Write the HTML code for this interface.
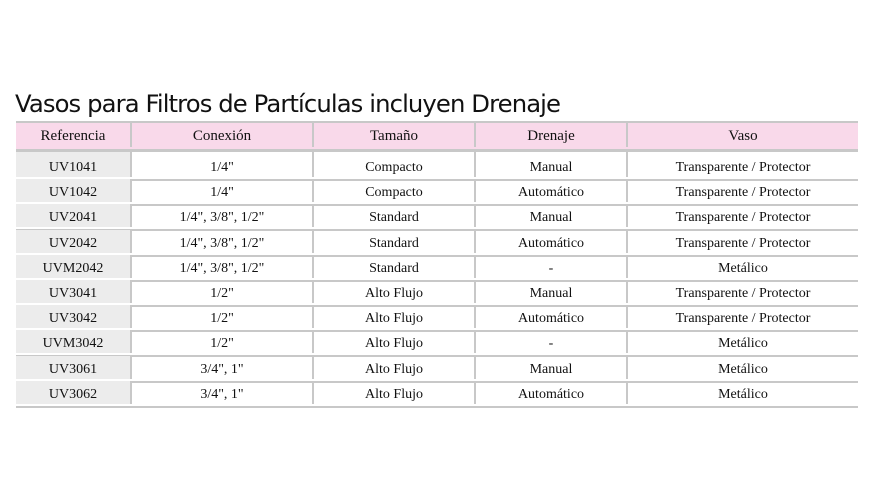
<!DOCTYPE html><html><head><style>
body{margin:0;width:870px;height:500px;background:#fff;position:relative;overflow:hidden}
h1{position:absolute;left:15px;top:89px;margin:0;font:normal 24.3px "DejaVu Sans","Liberation Sans",sans-serif;letter-spacing:-0.9px;color:#111;white-space:nowrap}
.r{position:absolute;left:16px;width:842px;display:flex;font:14px "Liberation Serif",serif;color:#111}
.r div{text-align:center;border-right:2px solid #c8c8c8;box-sizing:border-box}
.r div:last-child{border-right:none}
.c1{width:116px}.c2{width:182px}.c3{width:162px}.c4{width:152px}.c5{width:230px}
.hd{top:121px;height:26px;background:#f9d9ea;border-top:2px solid #c8c8c8;border-bottom:2px solid #c8c8c8;line-height:26px;font-size:15px}
.hd div{height:24px}
.b div{height:23px;line-height:28px}
.b{border-bottom:2px solid #c8c8c8;height:25px}
.b .c1{background:#ececec}
</style></head><body>
<h1>Vasos para Filtros de Partículas incluyen Drenaje</h1>
<div class="r hd"><div class="c1">Referencia</div><div class="c2">Conexión</div><div class="c3">Tamaño</div><div class="c4">Drenaje</div><div class="c5">Vaso</div></div>
<div class="r" style="top:150px;height:3px;border-top:2px solid #c8c8c8"><div class="c1" style="background:#ececec;height:3px"></div><div class="c2"></div><div class="c3"></div><div class="c4"></div><div class="c5"></div></div>
<div class="r b" style="top:154px"><div class="c1">UV1041</div><div class="c2">1/4"</div><div class="c3">Compacto</div><div class="c4">Manual</div><div class="c5">Transparente / Protector</div></div>
<div class="r b" style="top:179px"><div class="c1">UV1042</div><div class="c2">1/4"</div><div class="c3">Compacto</div><div class="c4">Automático</div><div class="c5">Transparente / Protector</div></div>
<div class="r b" style="top:204px"><div class="c1">UV2041</div><div class="c2">1/4", 3/8", 1/2"</div><div class="c3">Standard</div><div class="c4">Manual</div><div class="c5">Transparente / Protector</div></div>
<div class="r b" style="top:230px"><div class="c1">UV2042</div><div class="c2">1/4", 3/8", 1/2"</div><div class="c3">Standard</div><div class="c4">Automático</div><div class="c5">Transparente / Protector</div></div>
<div class="r b" style="top:255px"><div class="c1">UVM2042</div><div class="c2">1/4", 3/8", 1/2"</div><div class="c3">Standard</div><div class="c4">-</div><div class="c5">Metálico</div></div>
<div class="r b" style="top:280px"><div class="c1">UV3041</div><div class="c2">1/2"</div><div class="c3">Alto Flujo</div><div class="c4">Manual</div><div class="c5">Transparente / Protector</div></div>
<div class="r b" style="top:305px"><div class="c1">UV3042</div><div class="c2">1/2"</div><div class="c3">Alto Flujo</div><div class="c4">Automático</div><div class="c5">Transparente / Protector</div></div>
<div class="r b" style="top:330px"><div class="c1">UVM3042</div><div class="c2">1/2"</div><div class="c3">Alto Flujo</div><div class="c4">-</div><div class="c5">Metálico</div></div>
<div class="r b" style="top:356px"><div class="c1">UV3061</div><div class="c2">3/4", 1"</div><div class="c3">Alto Flujo</div><div class="c4">Manual</div><div class="c5">Metálico</div></div>
<div class="r b" style="top:381px"><div class="c1">UV3062</div><div class="c2">3/4", 1"</div><div class="c3">Alto Flujo</div><div class="c4">Automático</div><div class="c5">Metálico</div></div>
</body></html>
